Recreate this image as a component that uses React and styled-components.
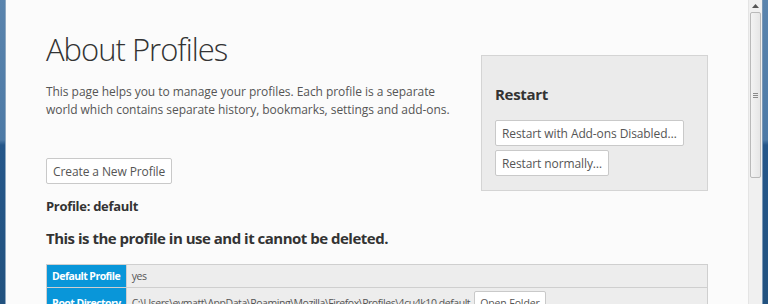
import React from "react";
import styled, { createGlobalStyle } from "styled-components";

const GlobalStyle = createGlobalStyle`
html, body {
  margin: 0;
  padding: 0;
  overflow: hidden;
  background: #fbfbfb;
}
`;

const Window = styled.div`
display: flex;
flex-direction: row;
width: 768px;
height: 304px;
overflow: hidden;
font-family: "Open Sans", "Noto Sans", sans-serif;
`;

const Frame = styled.div`
width: 6px;
flex-shrink: 0;
background: linear-gradient(to bottom, #5a84ad 0px, #4d7aa6 140px, #25578a 145px, #22527f 304px);
border-left: ${(p) => (p.right ? "1px solid #7a98b6" : "none")};
border-right: ${(p) => (p.right ? "none" : "1px solid #8fa9c2")};
box-sizing: border-box;
`;

const Page = styled.div`
flex: 1;
background: #fbfbfb;
padding: 29px 40px 0 40px;
overflow: hidden;
color: #555;
`;

const TopRow = styled.div`
display: flex;
flex-direction: row;
justify-content: space-between;
align-items: flex-start;
`;

const Intro = styled.div`
display: flex;
flex-direction: column;
align-items: flex-start;
`;

const Title = styled.h1`
margin: 0;
font-size: 31px;
line-height: 40px;
font-weight: 300;
color: #333;
letter-spacing: -1px;
`;

const Lead = styled.p`
margin: 14px 0 0;
font-size: 12px;
line-height: 18px;
color: #555;
letter-spacing: -0.05px;
white-space: nowrap;
`;

const Button = styled.button`
font-family: "Open Sans", "Noto Sans", sans-serif;
font-size: ${(p) => p.fs || 12}px;
letter-spacing: -0.1px;
color: #555;
background: #fff;
border: 1px solid #c9c9c9;
border-radius: 2px;
height: ${(p) => p.h || 26}px;
padding: 0 ${(p) => p.px || 6}px;
margin: 0;
cursor: pointer;
white-space: nowrap;
`;

const CreateButton = styled(Button)`
margin-top: 39px;
`;

const ProfileName = styled.h2`
margin: 13px 0 0;
font-size: 13px;
line-height: 18px;
font-weight: 700;
color: #333;
letter-spacing: -0.3px;
`;

const RestartBox = styled.div`
width: 227px;
height: 136px;
box-sizing: border-box;
margin-top: 26px;
background: #ebebeb;
border: 1px solid #d4d4d4;
padding: 28px 13px 0;
display: flex;
flex-direction: column;
align-items: flex-start;
gap: 4px;
`;

const RestartTitle = styled.h3`
margin: 0 0 12px;
font-size: 15px;
line-height: 20px;
font-weight: 700;
color: #333;
letter-spacing: -0.3px;
`;

const InUse = styled.h3`
margin: 12px 0 0;
font-size: 15px;
line-height: 22px;
font-weight: 700;
color: #333;
letter-spacing: -0.5px;
`;

const Table = styled.table`
margin-top: 15px;
width: 662px;
border-collapse: collapse;
border: 1px solid #cfcfcf;
font-size: 10.5px;
`;

const HeadCell = styled.th`
background: #0996d9;
color: #fff;
font-weight: 700;
text-align: left;
white-space: nowrap;
padding: 0 5px;
height: 22px;
width: 66px;
border: 1px solid #cfcfcf;
letter-spacing: -0.55px;
vertical-align: ${(p) => (p.top ? "top" : "middle")};
line-height: ${(p) => (p.top ? "30px" : "normal")};
`;

const DataCell = styled.td`
background: #ededed;
color: #555;
padding: ${(p) => (p.top ? "3px 5px" : "0 5px")};
height: 22px;
border: 1px solid #cfcfcf;
letter-spacing: -0.45px;
vertical-align: ${(p) => (p.top ? "top" : "middle")};
`;

const PathRow = styled.div`
display: flex;
flex-direction: row;
align-items: center;
gap: 4px;
`;

const Scrollbar = styled.div`
width: 14px;
flex-shrink: 0;
background: #f0f0f0;
border-left: 1px solid #e4e4e4;
box-sizing: border-box;
display: flex;
flex-direction: column;
align-items: center;
`;

const ArrowUp = styled.div`
height: 12px;
display: flex;
align-items: center;
justify-content: center;
`;

const Thumb = styled.div`
width: 11px;
height: 166px;
box-sizing: border-box;
border: 1px solid #b9b9b9;
border-radius: 2px;
background: linear-gradient(to right, #f3f3f3, #e6e6e6);
display: flex;
align-items: center;
justify-content: center;
`;

const Grip = styled.div`
width: 5px;
height: 5px;
background: repeating-linear-gradient(to bottom, #8a8a8a 0 1px, transparent 1px 2px);
`;

export default function App() {
  return (
    <>
      <GlobalStyle />
      <Window>
        <Frame />
        <Page>
          <TopRow>
            <Intro>
              <Title>About Profiles</Title>
              <Lead>
                This page helps you to manage your profiles. Each profile is a separate
                <br />
                world which contains separate history, bookmarks, settings and add-ons.
              </Lead>
              <CreateButton>Create a New Profile</CreateButton>
              <ProfileName>Profile: default</ProfileName>
            </Intro>
            <RestartBox>
              <RestartTitle>Restart</RestartTitle>
              <Button>Restart with Add-ons Disabled…</Button>
              <Button>Restart normally…</Button>
            </RestartBox>
          </TopRow>
          <InUse>This is the profile in use and it cannot be deleted.</InUse>
          <Table>
            <tbody>
              <tr>
                <HeadCell>Default Profile</HeadCell>
                <DataCell>yes</DataCell>
              </tr>
              <tr>
                <HeadCell top>Root Directory</HeadCell>
                <DataCell top>
                  <PathRow>
                    <span>C:\Users\evmatt\AppData\Roaming\Mozilla\Firefox\Profiles\4cu4k10.default</span>
                    <Button h={24} fs={10.5} px={5}>Open Folder</Button>
                  </PathRow>
                </DataCell>
              </tr>
            </tbody>
          </Table>
        </Page>
        <Scrollbar>
          <ArrowUp>
            <svg width="7" height="4" viewBox="0 0 7 4">
              <path d="M0 4 L3.5 0 L7 4 Z" fill="#555" />
            </svg>
          </ArrowUp>
          <Thumb>
            <Grip />
          </Thumb>
        </Scrollbar>
        <Frame right />
      </Window>
    </>
  );
}
